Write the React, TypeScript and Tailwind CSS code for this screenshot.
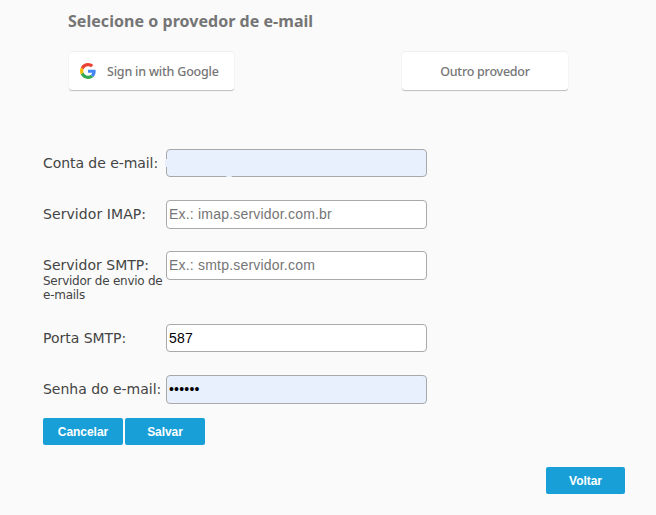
import { useState } from "react";
import clsx from "clsx";

type Field = {
  id: string;
  label: string;
  labelClass: string;
  hint?: string;
  type?: string;
  placeholder?: string;
  autofilled?: boolean;
  rowClass: string;
  inputClass: string;
};

const fields: Field[] = [
  { id: "account", label: "Conta de e-mail:", labelClass: "tracking-[-0.06px]", autofilled: true, rowClass: "h-[51px]", inputClass: "h-7" },
  { id: "imap", label: "Servidor IMAP:", labelClass: "tracking-[0.08px]", placeholder: "Ex.: imap.servidor.com.br", rowClass: "h-[51px]", inputClass: "h-[29px] pb-[2px]" },
  { id: "smtp", label: "Servidor SMTP:", labelClass: "tracking-[0.02px]", hint: "Servidor de envio de e-mails", placeholder: "Ex.: smtp.servidor.com", rowClass: "h-[73px]", inputClass: "h-[29px] pb-[2px]" },
  { id: "port", label: "Porta SMTP:", labelClass: "tracking-[-0.02px]", rowClass: "h-[51px]", inputClass: "h-7" },
  { id: "password", label: "Senha do e-mail:", labelClass: "tracking-[-0.02px]", type: "password", autofilled: true, rowClass: "h-[43px]", inputClass: "h-[29px] pb-[2px]" },
];

function GoogleIcon() {
  return (
    <svg viewBox="0 0 48 48" className="-mt-[2px] h-4 w-4 shrink-0" aria-hidden="true">
      <path fill="#EA4335" d="M24 9.5c3.54 0 6.71 1.22 9.21 3.6l6.85-6.85C35.9 2.38 30.47 0 24 0 14.62 0 6.51 5.38 2.56 13.22l7.98 6.19C12.43 13.72 17.74 9.5 24 9.5z" />
      <path fill="#4285F4" d="M46.98 24.55c0-1.57-.15-3.09-.38-4.55H24v9.02h12.94c-.58 2.96-2.26 5.48-4.78 7.18l7.73 6c4.51-4.18 7.09-10.36 7.09-17.65z" />
      <path fill="#FBBC05" d="M10.53 28.59c-.48-1.45-.76-2.99-.76-4.59s.27-3.14.76-4.59l-7.98-6.19C.92 16.46 0 20.12 0 24c0 3.88.92 7.54 2.56 10.78l7.97-6.19z" />
      <path fill="#34A853" d="M24 48c6.48 0 11.93-2.13 15.89-5.81l-7.73-6c-2.15 1.45-4.92 2.3-8.16 2.3-6.26 0-11.57-4.22-13.47-9.91l-7.98 6.19C6.51 42.62 14.62 48 24 48z" />
    </svg>
  );
}

const providerButton =
  "flex h-[38px] items-center rounded-[3px] bg-white pt-px font-['Noto_Sans'] text-[12.5px] font-medium text-[#757575] shadow-[0_-1px_0_rgba(0,0,0,0.04),0_1px_1px_rgba(0,0,0,0.25)]";

const actionButton =
  "h-[27px] rounded-[2px] bg-[#189fd8] font-['Liberation_Sans'] text-[12px] font-bold tracking-[-0.05px] text-white";

export default function App() {
  const [values, setValues] = useState<Record<string, string>>({ port: "587", password: "123456" });

  return (
    <div className="h-[515px] w-[656px] overflow-hidden bg-[#fafafa] font-['DejaVu_Sans',sans-serif] text-[#444]">
      <h1 className="pt-[9px] pl-[68px] font-['Noto_Sans'] text-[16px] leading-6 font-bold tracking-[0.04px] whitespace-nowrap text-[#757575]">
        Selecione o provedor de e-mail
      </h1>

      {/* Providers */}
      <div className="mt-[19px] flex gap-[168px] pl-[69px]">
        <button type="button" className={clsx(providerButton, "w-[165px] gap-[11px] pl-[11px] whitespace-nowrap tracking-[-0.2px]")}>
          <GoogleIcon />
          <span className="pt-px">Sign in with Google</span>
        </button>
        <button type="button" className={clsx(providerButton, "w-[166px] justify-center tracking-[-0.24px]")}>
          <span className="pt-px">Outro provedor</span>
        </button>
      </div>

      {/* Account form */}
      <form className="mt-[59px] pl-[43px]" onSubmit={(e) => e.preventDefault()}>
        {fields.map((f) => (
          <div key={f.id} className={clsx("flex items-start", f.rowClass)}>
            <label htmlFor={f.id} className="w-[123px] shrink-0 pt-[5px] whitespace-nowrap">
              <span className={clsx("block text-[14px] leading-[18px]", f.labelClass)}>{f.label}</span>
              {f.hint && (
                <span className="block w-[123px] text-[12px] leading-[14px] tracking-[-0.25px] whitespace-normal">
                  {f.hint}
                </span>
              )}
            </label>
            <div className="relative">
              <input
                id={f.id}
                type={f.type ?? "text"}
                value={values[f.id] ?? ""}
                placeholder={f.placeholder}
                onChange={(e) => setValues({ ...values, [f.id]: e.target.value })}
                className={clsx(
                  "block w-[261px] rounded-[4px] border border-[#a9a9a9] px-[2px] font-['Liberation_Sans'] text-[14px] tracking-[0.2px] text-black outline-none placeholder:text-[#757575]",
                  f.autofilled ? "bg-[#e8f0fe]" : "bg-white",
                  f.inputClass,
                )}
              />
              {f.id === "account" && (
                <>
                  <span className="absolute top-[10px] -left-px h-2 w-[3px] rounded-full bg-[#e8f0fe]" />
                  <span className="absolute top-[26px] left-[60px] h-[2px] w-[6px] rounded-full bg-[#e8f0fe]" />
                </>
              )}
            </div>
          </div>
        ))}
        <div className="flex gap-[2px]">
          <button type="button" className={clsx(actionButton, "w-20")}>Cancelar</button>
          <button type="submit" className={clsx(actionButton, "w-20")}>Salvar</button>
        </div>
      </form>

      <div className="mt-[22px] flex justify-end pr-[31px]">
        <button type="button" className={clsx(actionButton, "w-[79px]")}>Voltar</button>
      </div>
    </div>
  );
}
